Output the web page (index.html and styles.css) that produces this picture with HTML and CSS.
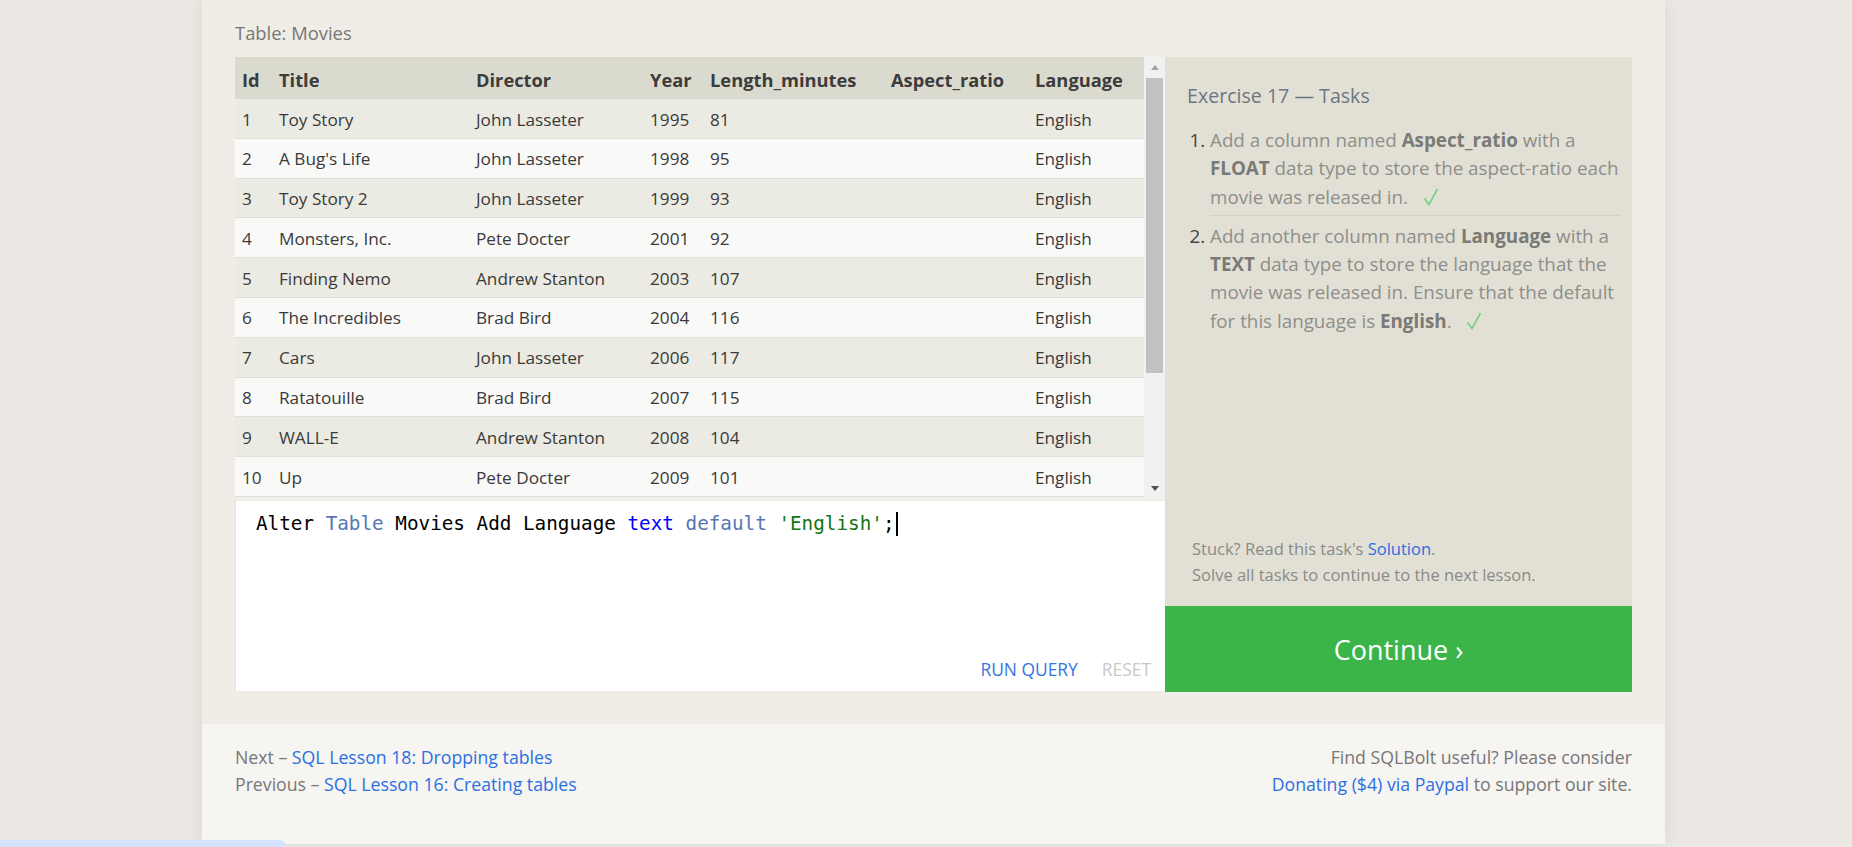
FILE: index.html
```html
<!DOCTYPE html>
<html lang="en">
<head>
<meta charset="utf-8">
<title>SQL Lesson 17</title>
<link rel="stylesheet" href="styles.css">
</head>
<body>
<div class="page">
  <section class="lesson">
    <div class="table-label">Table: Movies</div>
    <div class="workspace">
      <div class="left-col">
        <div class="results">
          <div class="table-scroll">
            <table class="data">
              <colgroup>
                <col class="c-id"><col class="c-title"><col class="c-director"><col class="c-year"><col class="c-length"><col class="c-aspect"><col class="c-lang">
              </colgroup>
              <thead>
                <tr><th>Id</th><th>Title</th><th>Director</th><th>Year</th><th>Length_minutes</th><th>Aspect_ratio</th><th>Language</th></tr>
              </thead>
              <tbody>
                <tr><td>1</td><td>Toy Story</td><td>John Lasseter</td><td>1995</td><td>81</td><td></td><td>English</td></tr>
                <tr><td>2</td><td>A Bug's Life</td><td>John Lasseter</td><td>1998</td><td>95</td><td></td><td>English</td></tr>
                <tr><td>3</td><td>Toy Story 2</td><td>John Lasseter</td><td>1999</td><td>93</td><td></td><td>English</td></tr>
                <tr><td>4</td><td>Monsters, Inc.</td><td>Pete Docter</td><td>2001</td><td>92</td><td></td><td>English</td></tr>
                <tr><td>5</td><td>Finding Nemo</td><td>Andrew Stanton</td><td>2003</td><td>107</td><td></td><td>English</td></tr>
                <tr><td>6</td><td>The Incredibles</td><td>Brad Bird</td><td>2004</td><td>116</td><td></td><td>English</td></tr>
                <tr><td>7</td><td>Cars</td><td>John Lasseter</td><td>2006</td><td>117</td><td></td><td>English</td></tr>
                <tr><td>8</td><td>Ratatouille</td><td>Brad Bird</td><td>2007</td><td>115</td><td></td><td>English</td></tr>
                <tr><td>9</td><td>WALL-E</td><td>Andrew Stanton</td><td>2008</td><td>104</td><td></td><td>English</td></tr>
                <tr><td>10</td><td>Up</td><td>Pete Docter</td><td>2009</td><td>101</td><td></td><td>English</td></tr>
              </tbody>
            </table>
          </div>
          <div class="vscroll">
            <div class="sb-btn"><span class="tri-up"></span></div>
            <div class="sb-thumb"></div>
            <div class="sb-track"></div>
            <div class="sb-btn"><span class="tri-down"></span></div>
          </div>
        </div>
        <div class="editor">
          <div class="code"><span class="k-plain">Alter</span> <span class="k-soft">Table</span> Movies Add Language <span class="k-type">text</span> <span class="k-soft">default</span> <span class="k-str">'English'</span>;<span class="caret"></span></div>
          <div class="editor-actions">
            <span class="btn-run">RUN QUERY</span>
            <span class="btn-reset">RESET</span>
          </div>
        </div>
      </div>
      <div class="right-col">
        <div class="tasks">
          <h3 class="tasks-title">Exercise 17 — Tasks</h3>
          <ol class="task-list">
            <li>Add a column named <b>Aspect_ratio</b> with a <b>FLOAT</b> data type to store the aspect-ratio each movie was released in. <svg class="check" viewBox="0 0 16 20" width="16" height="20"><path d="M1.5 11.5 L6 17.5 L14.5 2" fill="none" stroke="#74cf80" stroke-width="1.6"/></svg></li>
            <li>Add another column named <b>Language</b> with a <b>TEXT</b> data type to store the language that the movie was released in. Ensure that the default for this language is <b>English</b>. <svg class="check" viewBox="0 0 16 20" width="16" height="20"><path d="M1.5 11.5 L6 17.5 L14.5 2" fill="none" stroke="#74cf80" stroke-width="1.6"/></svg></li>
          </ol>
          <div class="hint">
            <div>Stuck? Read this task's <a class="link">Solution</a>.</div>
            <div>Solve all tasks to continue to the next lesson.</div>
          </div>
        </div>
        <div class="continue">Continue ›</div>
      </div>
    </div>
  </section>
  <footer class="footer">
    <div class="nav">
      <div>Next – <a class="link">SQL Lesson 18: Dropping tables</a></div>
      <div>Previous – <a class="link">SQL Lesson 16: Creating tables</a></div>
    </div>
    <div class="donate">
      <div>Find SQLBolt useful? Please consider</div>
      <div><a class="link">Donating ($4) via Paypal</a> to support our site.</div>
    </div>
  </footer>
</div>
<div class="dl-tab"></div>
</body>
</html>
```
FILE: styles.css
```css
html, body {
  margin: 0;
  padding: 0;
}
body {
  background: #ebe7e3;
  font-family: "Open Sans", "Noto Sans", sans-serif;
  height: 847px;
  overflow: hidden;
}
.page {
  width: 1463px;
  margin-left: 202px;
  box-shadow: 0 0 16px rgba(0, 0, 0, 0.07);
}
.lesson {
  background: #f0ede6;
  padding: 21px 33px 32px;
}
.table-label {
  font-size: 18.4px;
  line-height: 24px;
  color: #777;
  margin-bottom: 12px;
}
.workspace {
  display: flex;
}
.left-col {
  width: 930px;
  display: flex;
  flex-direction: column;
}
.results {
  display: flex;
  height: 442px;
}
.table-scroll {
  width: 909px;
  height: 442px;
  overflow: hidden;
  background: #f1f1f1;
}
table.data {
  width: 909px;
  table-layout: fixed;
  border-collapse: separate;
  border-spacing: 0;
  font-size: 17.2px;
  color: #3a3a3a;
}
.c-id { width: 37px; }
.c-title { width: 197px; }
.c-director { width: 174px; }
.c-year { width: 60px; }
.c-length { width: 181px; }
.c-aspect { width: 144px; }
.c-lang { width: 116px; }
.data th {
  background: #dbdacf;
  text-align: left;
  font-weight: 700;
  font-size: 18.3px;
  color: #3c3c3c;
  padding: 12px 7px 8px;
  line-height: 22px;
  white-space: nowrap;
}
.data td {
  padding: 9.5px 7px 6.5px;
  line-height: 22.8px;
  border-bottom: 1px solid #dfded7;
  white-space: nowrap;
}
.data tbody tr:nth-child(odd) td { background: #ebeae3; }
.data tbody tr:nth-child(even) td { background: #f9f9f8; }

.vscroll {
  width: 21px;
  background: #f1f1f1;
  display: flex;
  flex-direction: column;
}
.sb-btn {
  height: 21px;
  display: flex;
  align-items: center;
  justify-content: center;
}
.tri-up {
  width: 0;
  height: 0;
  border-left: 4.5px solid transparent;
  border-right: 4.5px solid transparent;
  border-bottom: 5px solid #a3a3a3;
}
.tri-down {
  width: 0;
  height: 0;
  border-left: 4.5px solid transparent;
  border-right: 4.5px solid transparent;
  border-top: 5px solid #505050;
}
.sb-thumb {
  height: 295px;
  margin: 0 2px;
  background: #c1c1c1;
}
.sb-track { flex: 1; }

.editor {
  margin-top: 2px;
  height: 190px;
  background: #fff;
  border-left: 1px solid #e6e4dd;
  box-sizing: border-box;
  display: flex;
  flex-direction: column;
}
.code {
  flex: 1;
  font-family: "DejaVu Sans Mono", "Liberation Mono", monospace;
  font-size: 19.3px;
  line-height: 24px;
  padding: 11px 20px 9px;
  color: #000;
  white-space: pre;
}
.k-soft { color: #5676b4; }
.k-type { color: #0000ff; }
.k-str { color: #137413; }
.caret {
  display: inline-block;
  width: 2px;
  height: 24px;
  background: #000;
  vertical-align: top;
  margin-left: 1px;
}
.editor-actions {
  display: flex;
  justify-content: flex-end;
  gap: 24px;
  padding: 0 14px 10px;
  font-size: 17.4px;
  line-height: 24px;
}
.btn-run { color: #3475e0; }
.btn-reset { color: #c9c9c9; }

.right-col {
  width: 467px;
  display: flex;
  flex-direction: column;
}
.tasks {
  height: 549px;
  box-sizing: border-box;
  background: #e2e0d5;
  padding: 26px 8px 18px 22px;
  display: flex;
  flex-direction: column;
}
.tasks-title {
  margin: 0 0 17px;
  font-size: 19.6px;
  font-weight: 400;
  line-height: 26px;
  color: #6d7683;
}
.task-list {
  margin: 0;
  padding-left: 23px;
  font-size: 18.8px;
  line-height: 28.3px;
  color: #8e8e8a;
}
.task-list li::marker { color: #444; }
.task-list li:first-child {
  border-bottom: 1px solid #d4d2c7;
  padding-bottom: 4px;
  margin-right: 3px;
}
.task-list li + li { padding-top: 6px; }
.task-list b { color: #7a7a76; font-weight: 700; }
.check {
  margin-left: 10px;
  vertical-align: -3px;
}
.hint {
  margin-top: auto;
  padding-left: 5px;
  font-size: 16.5px;
  line-height: 26px;
  color: #8a8a86;
}
.link { color: #2b6fe3; text-decoration: none; }
.continue {
  height: 86px;
  background: #3bb54a;
  color: #fff;
  font-size: 27px;
  display: flex;
  align-items: center;
  justify-content: center;
}

.footer {
  background: #f6f5f1;
  padding: 20px 33px 46px;
  display: flex;
  justify-content: space-between;
  font-size: 17.7px;
  line-height: 27px;
  color: #777;
}
.donate { text-align: right; }

.dl-tab {
  position: fixed;
  left: 0;
  bottom: 0;
  width: 286px;
  height: 7px;
  background: #d3e3fd;
  border-top-right-radius: 7px;
}
```
